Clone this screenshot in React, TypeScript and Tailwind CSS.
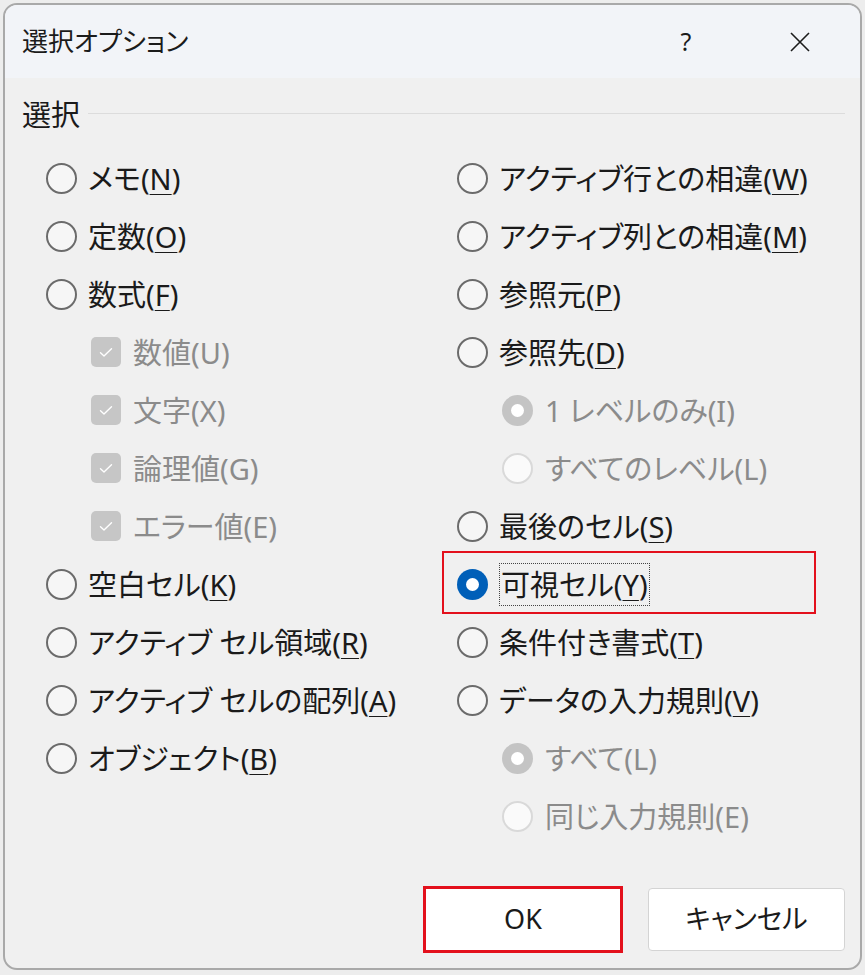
import React from 'react'

type Kind = 'radio' | 'radioOn' | 'subRadioOn' | 'subRadio' | 'check'

type Row = {
  kind: Kind
  label: string
  key?: string
  focus?: boolean
  marked?: boolean
}

const LEFT: Row[] = [
  { kind: 'radio', label: 'メモ', key: 'N' },
  { kind: 'radio', label: '定数', key: 'O' },
  { kind: 'radio', label: '数式', key: 'F' },
  { kind: 'check', label: '数値(U)' },
  { kind: 'check', label: '文字(X)' },
  { kind: 'check', label: '論理値(G)' },
  { kind: 'check', label: 'エラー値(E)' },
  { kind: 'radio', label: '空白セル', key: 'K' },
  { kind: 'radio', label: 'アクティブ セル領域', key: 'R' },
  { kind: 'radio', label: 'アクティブ セルの配列', key: 'A' },
  { kind: 'radio', label: 'オブジェクト', key: 'B' },
]

const RIGHT: Row[] = [
  { kind: 'radio', label: 'アクティブ行との相違', key: 'W' },
  { kind: 'radio', label: 'アクティブ列との相違', key: 'M' },
  { kind: 'radio', label: '参照元', key: 'P' },
  { kind: 'radio', label: '参照先', key: 'D' },
  { kind: 'subRadioOn', label: '1 レベルのみ(I)' },
  { kind: 'subRadio', label: 'すべてのレベル(L)' },
  { kind: 'radio', label: '最後のセル', key: 'S' },
  { kind: 'radioOn', label: '可視セル', key: 'Y', focus: true, marked: true },
  { kind: 'radio', label: '条件付き書式', key: 'T' },
  { kind: 'radio', label: 'データの入力規則', key: 'V' },
  { kind: 'subRadioOn', label: 'すべて(L)' },
  { kind: 'subRadio', label: '同じ入力規則(E)' },
]

const Mark = ({ kind }: { kind: Kind }) => {
  if (kind === 'check') {
    return (
      <span className="flex h-[30px] w-[30px] shrink-0 items-center justify-center rounded-[5px] bg-[#c6c6c6]">
        <svg width="14" height="11" viewBox="0 0 14 11" fill="none">
          <path d="M1.5 5.8 L5 9 L12.5 1.8" stroke="#fff" strokeWidth="1.4" strokeLinecap="round" strokeLinejoin="round" />
        </svg>
      </span>
    )
  }
  if (kind === 'radioOn') {
    return (
      <span className="flex h-[31px] w-[31px] shrink-0 items-center justify-center rounded-full bg-[#005fb8]">
        <span className="h-[13px] w-[13px] rounded-full bg-white" />
      </span>
    )
  }
  if (kind === 'subRadioOn') {
    return (
      <span className="flex h-[31px] w-[31px] shrink-0 items-center justify-center rounded-full bg-[#c4c4c4]">
        <span className="h-[13px] w-[13px] rounded-full bg-white" />
      </span>
    )
  }
  if (kind === 'subRadio') {
    return <span className="h-[31px] w-[31px] shrink-0 rounded-full border-2 border-[#d9d9d9] bg-[#fafafa]" />
  }
  return <span className="h-[31px] w-[31px] shrink-0 rounded-full border-2 border-[#6b6b6b] bg-[#f6f6f6]" />
}

const Option = ({ row }: { row: Row }) => {
  const sub = row.kind === 'check' || row.kind === 'subRadio' || row.kind === 'subRadioOn'
  const text = row.key ? (
    <>
      {row.label}(<u className="decoration-1 underline-offset-[4px]">{row.key}</u>)
    </>
  ) : (
    row.label
  )

  return (
    <div className={`relative flex h-[58px] items-center ${sub ? 'pl-[45px]' : ''}`}>
      {row.marked && (
        <div className="pointer-events-none absolute left-[-15px] top-[-4px] h-[63px] w-[374px] border-2 border-[#e3101c]" />
      )}
      <Mark kind={row.kind} />
      <span
        className={`whitespace-nowrap text-[29px] leading-none ${sub ? 'ml-[12px] text-[#8b8b8b]' : 'ml-[11px] text-[#1a1a1a]'} ${
          row.focus ? 'border border-dotted border-[#444] px-[1px] py-[6px]' : ''
        }`}
      >
        {text}
      </span>
    </div>
  )
}

export default function App() {
  return (
    <div className="h-[975px] w-[865px] bg-[#ededed] pl-[3px] pt-[3px] font-['Noto_Sans','Noto_Sans_CJK_JP',sans-serif] [font-feature-settings:'palt']">
      <div className="flex h-[967px] w-[859px] flex-col overflow-hidden rounded-[14px] border-2 border-[#a9a9a9] bg-[#f0f0f0]">
        {/* title bar */}
        <div className="flex h-[73px] shrink-0 items-center bg-[#f2f4f8] pl-[17px] pr-[40px]">
          <span className="flex-1 text-[26px] text-[#1b1b1b]">選択オプション</span>
          <span className="flex w-[40px] justify-center text-[25px] text-[#1b1b1b]">?</span>
          <span className="ml-[74px] flex w-[40px] justify-center">
            <svg width="22" height="22" viewBox="0 0 22 22">
              <path d="M2 2 L20 20 M20 2 L2 20" stroke="#1b1b1b" strokeWidth="1.6" />
            </svg>
          </span>
        </div>

        {/* group label */}
        <div className="mt-[17px] flex h-[40px] items-center pl-[17px] pr-[15px]">
          <span className="text-[29px] text-[#1a1a1a]">選択</span>
          <div className="ml-[8px] mt-[-4px] h-px flex-1 bg-[#dcdcdc]" />
        </div>

        {/* options */}
        <div className="mt-[14px] flex pl-[41px]">
          <div className="flex w-[411px] flex-col">
            {LEFT.map((row) => (
              <Option key={row.label} row={row} />
            ))}
          </div>
          <div className="flex flex-col">
            {RIGHT.map((row) => (
              <Option key={row.label} row={row} />
            ))}
          </div>
        </div>

        {/* buttons */}
        <div className="mt-auto mb-[15px] flex items-center justify-end gap-[25px] pr-[15px]">
          <button className="flex h-[67px] w-[200px] items-center justify-center border-[3px] border-[#e3101c] bg-white text-[27px] text-[#1a1a1a]">
            OK
          </button>
          <button className="flex h-[63px] w-[197px] items-center justify-center rounded-[4px] border border-[#d4d4d4] bg-white text-[27px] text-[#1a1a1a]">
            キャンセル
          </button>
        </div>
      </div>
    </div>
  )
}
